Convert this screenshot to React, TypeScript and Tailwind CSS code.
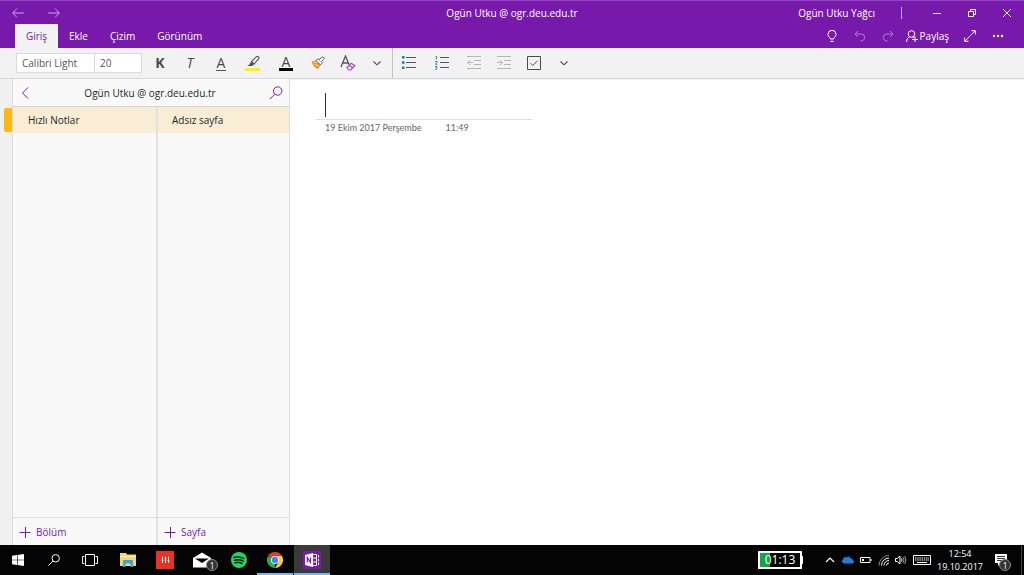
import React from 'react';

const tabs = ['Ekle', 'Çizim', 'Görünüm'];

const stroke = { fill: 'none', stroke: 'currentColor' } as const;

const Chevron = () => (
  <svg className="w-2 h-2" viewBox="0 0 8 8" {...stroke}>
    <path d="M.5 2.500L4 5.800l3.500-3.300" strokeWidth="1.100" />
  </svg>
);

const TitleBar = () => (
  <div className="grid h-6 grid-cols-[1fr_auto_1fr] items-center border-t border-[#8f45bd]">
    <div className="flex items-center pl-1 text-[#cfa9e6]">
      <button aria-label="Geri" className="flex w-7 justify-center">
        <svg className="w-3 h-3" viewBox="0 0 12 12" {...stroke}>
          <path d="M12 6H.7M5 1.5L.7 6 5 10.500" />
        </svg>
      </button>
      <button aria-label="İleri" className="ml-2 flex w-7 justify-center">
        <svg className="w-3 h-3" viewBox="0 0 12 12" {...stroke}>
          <path d="M0 6h11.300M7 1.500L11.300 6 7 10.500" />
        </svg>
      </button>
    </div>
    <h1>Ogün Utku @ ogr.deu.edu.tr</h1>
    <div className="flex items-center justify-end">
      <span>Ogün Utku Yağcı</span>
      <span className="ml-[26px] mr-[17px] h-3 w-px bg-white/60" />
      <button aria-label="Simge durumuna küçült" className="flex w-[35px] justify-center">
        <svg className="w-2 h-2" viewBox="0 0 8 8" {...stroke}><path d="M0 4.500h8" /></svg>
      </button>
      <button aria-label="Geri yükle" className="flex w-[35px] justify-center">
        <svg className="w-2 h-2" viewBox="0 0 8 8" {...stroke}>
          <path d="M.5 2.500h5v5h-5zM2.500 2V.5h5v5H6" />
        </svg>
      </button>
      <button aria-label="Kapat" className="flex w-[35px] justify-center">
        <svg className="w-2 h-2" viewBox="0 0 8 8" {...stroke}><path d="M0 0l8 8M8 0L0 8" /></svg>
      </button>
    </div>
  </div>
);

const TabBar = () => (
  <div className="flex h-6 items-stretch justify-between pl-[15px]">
    <nav className="flex">
      <button className="w-[43px] bg-[#f2f2f2] text-[#7719aa]">Giriş</button>
      {tabs.map((tab) => (
        <button key={tab} className="px-[11px]">{tab}</button>
      ))}
    </nav>
    <div className="flex items-center pr-3">
      <button aria-label="Göster" className="flex w-7 justify-center">
        <svg className="w-3 h-3" viewBox="0 0 12 12" {...stroke}>
          <path d="M4.300 9V8C2.700 6.800 2 5.800 2 4.300a4 4 0 018 0c0 1.500-.7 2.500-2.300 3.700v1zM4.500 11.300h3" />
        </svg>
      </button>
      <button aria-label="Geri al" className="flex w-7 justify-center text-[#b27fd3]">
        <svg className="w-3 h-3" viewBox="0 0 12 12" {...stroke}>
          <path d="M4 1L1 4l3 3M1 4h6.500a3.500 3.500 0 013.200 3.500C10.700 9.500 9 11 6.500 11" />
        </svg>
      </button>
      <button aria-label="Yinele" className="flex w-7 justify-center text-[#b27fd3]">
        <svg className="w-3 h-3" viewBox="0 0 12 12" {...stroke}>
          <path d="M8 1l3 3-3 3M11 4H4.500a3.500 3.500 0 00-3.200 3.500C1.300 9.500 3 11 5.500 11" />
        </svg>
      </button>
      <button className="ml-1 flex items-center gap-[2px]">
        <svg className="w-3 h-3" viewBox="0 0 12 12" {...stroke}>
          <circle cx="5.500" cy="4" r="3.300" />
          <path d="M.6 12c0-2.800 1.300-4.500 3.200-5.200M7 7l1 1M6 9.500h6M9 6.500v6" />
        </svg>
        Paylaş
      </button>
      <button aria-label="Tam ekran" className="ml-[7px] flex w-7 justify-center">
        <svg className="w-3 h-3" viewBox="0 0 12 12" {...stroke}>
          <path d="M1 11L11 1M7.500.7h3.800v3.800M.7 7.500v3.800h3.800" />
        </svg>
      </button>
      <button aria-label="Diğer" className="flex w-7 justify-center">
        <svg className="w-3 h-3" viewBox="0 0 12 12" fill="currentColor">
          <circle cx="2" cy="6" r="1.200" /><circle cx="6" cy="6" r="1.200" /><circle cx="10" cy="6" r="1.200" />
        </svg>
      </button>
    </div>
  </div>
);

const IndentLines = ({ arrow }: { arrow: string }) => (
  <svg className="w-[14px] h-[14px]" viewBox="0 0 14 14" {...stroke}>
    <path d="M0 .5h14M7 4.500h7M7 8.500h7M0 12.500h14" />
    <path d={arrow} />
  </svg>
);

const Toolbar = () => (
  <div className="flex h-[31px] items-center border-b border-[#d8d8d8] bg-[#f2f2f2] pl-4 text-[#4a4a4a]">
    <input aria-label="Yazı tipi" defaultValue="Calibri Light" className="h-5 w-[79px] border border-[#dadada] bg-white px-[5px] text-[#555]" />
    <input aria-label="Yazı tipi boyutu" defaultValue="20" className="h-5 w-[47px] border border-l-0 border-[#dadada] bg-white px-[5px] text-[#555]" />
    <button className="ml-[3px] w-[30px] text-sm font-bold">K</button>
    <button className="w-[30px] text-sm italic">T</button>
    <button className="flex w-8 justify-center text-sm">
      <span className="border-b border-[#555] px-px leading-[14px]">A</span>
    </button>
    <button aria-label="Vurgulayıcı" className="flex w-8 justify-center">
      <svg className="w-4 h-4" viewBox="0 0 16 16">
        <path d="M0 13h15v3H0z" fill="#fff200" />
        <path d="M6.500 6.500l5-4.800c1.500-.8 3 .5 2.300 2L9 9z" fill="none" stroke="#555" strokeWidth="1.100" />
        <path d="M6 6.500L9.300 9.500 7 11H2.500l2.300-2z" fill="#555" />
      </svg>
    </button>
    <button className="flex w-[34px] justify-center text-sm">
      <span className="border-b-3 border-black px-[3px] leading-[13px]">A</span>
    </button>
    <button aria-label="Biçim boyacısı" className="flex w-[29px] justify-center">
      <svg className="w-[14px] h-[14px]" viewBox="0 0 14 14">
        <path d="M.5 5.500l4.300-1 5 4.300-2.800 4.200C4 12 1.500 9 .5 5.500z" fill="#e8932b" />
        <path d="M2.500 6l5 .8M3.500 8l4 2" stroke="#fbe3bb" strokeWidth=".9" />
        <path d="M4.800 4.500L7 2.800l4.500 4-2 2z" fill="#fff" stroke="#555" strokeWidth=".9" />
        <path d="M8 3.600L11.800.8l1.600 1.500-3 3.500" fill="#fff" stroke="#555" strokeWidth=".9" />
      </svg>
    </button>
    <button aria-label="Biçimlendirmeyi temizle" className="flex w-[31px] justify-center">
      <svg className="w-4 h-4" viewBox="0 0 16 16" fill="none">
        <path d="M1 12L5.500 1 9 9.500M2.600 8h5.800" stroke="#555" strokeWidth="1.300" />
        <path d="M7 12.500l4.200-4.200 3.600 2.400-4 4.300H9zM9.300 10.300l3.300 2.500" stroke="#b146c2" strokeWidth="1.200" />
      </svg>
    </button>
    <button aria-label="Diğer yazı tipi seçenekleri" className="flex w-7 justify-center"><Chevron /></button>
    <span className="ml-px h-full w-px bg-[#c4c4c4]" />
    <button aria-label="Madde işaretleri" className="flex w-8 justify-center">
      <svg className="w-[14px] h-[14px]" viewBox="0 0 14 14">
        <path d="M4 1.500h10M4 6.500h10M4 11.500h10" stroke="#555" />
        <path d="M0 0h2.500v2.500H0zM0 5.300h2.500v2.500H0zM0 10.500h2.500V13H0z" fill="#1c7da3" />
      </svg>
    </button>
    <button aria-label="Numaralandırma" className="flex w-[33px] justify-center">
      <svg className="w-[14px] h-[14px]" viewBox="0 0 14 14" fill="none">
        <path d="M5 1.500h9M5 6.500h9M5 11.500h9" stroke="#555" />
        <path d="M.5.8l1-.5V3.500M0 5.500h2v1L.3 8.300H2.400M0 10.500h2L1 11.800c1.600 0 1.600 1.700-1 1.500" stroke="#1c7da3" strokeWidth=".9" />
      </svg>
    </button>
    <button aria-label="Girintiyi azalt" disabled className="flex w-[31px] justify-center text-[#b5b5b5]">
      <IndentLines arrow="M6 6.500H.7M3 4L.7 6.500 3 9" />
    </button>
    <button aria-label="Girintiyi artır" disabled className="flex w-[30px] justify-center text-[#b5b5b5]">
      <IndentLines arrow="M0 6.500h5.300M3 4l2.300 2.500L3 9" />
    </button>
    <button aria-label="Yapılacak etiketi" className="flex w-[30px] justify-center">
      <svg className="w-[14px] h-[14px]" viewBox="0 0 14 14" {...stroke}>
        <path d="M.5.5h13v13H.5zM3.500 7.200l2.300 2.300 4.700-4.800" />
      </svg>
    </button>
    <button aria-label="Diğer etiketler" className="flex w-[29px] justify-center"><Chevron /></button>
  </div>
);

const AddButton = ({ label }: { label: string }) => (
  <button className="flex h-7 items-center gap-[5px] border-t border-[#dcdcdc] pl-[6px] text-[#7719aa]">
    <svg className="w-3 h-3" viewBox="0 0 12 12" {...stroke}><path d="M.5 6.500h11M6.500 1v11" /></svg>
    {label}
  </button>
);

const Sidebar = () => (
  <aside className="flex border-r border-[#dcdcdc] text-[#262626]">
    <div className="flex w-[13px] flex-col items-end border-r border-[#dcdcdc] bg-[#f0f0f0] pt-[29px]">
      <span className="h-6 w-2 rounded-l-xs bg-[#fdb913]" />
    </div>
    <div className="flex w-[276px] flex-col bg-[#f9f9f9]">
      <div className="flex h-7 items-center justify-between border-b border-[#d4d4d4] px-[6px] text-[#7719aa]">
        <button aria-label="Geri">
          <svg className="w-3 h-3" viewBox="0 0 12 12" {...stroke}><path d="M9 .5L3.500 6 9 11.500" /></svg>
        </button>
        <h2 className="text-[#262626]">Ogün Utku @ ogr.deu.edu.tr</h2>
        <button aria-label="Ara">
          <svg className="w-[14px] h-[14px]" viewBox="0 0 14 14" {...stroke}>
            <circle cx="8.700" cy="5" r="4.200" /><path d="M5.700 8.200L.7 13.200" />
          </svg>
        </button>
      </div>
      <div className="flex flex-1">
        <div className="flex w-[145px] flex-col border-r-2 border-[#e2e2e2]">
          <button className="h-[26px] bg-[#f9edd5] pl-[15px] text-left">Hızlı Notlar</button>
          <div className="flex-1" />
          <AddButton label="Bölüm" />
        </div>
        <div className="flex flex-1 flex-col">
          <button className="h-[26px] bg-[#f9edd5] pl-[14px] text-left">Adsız sayfa</button>
          <div className="flex-1" />
          <AddButton label="Sayfa" />
        </div>
      </div>
    </div>
  </aside>
);

const NotePage = () => (
  <main className="flex-1 bg-white pl-[26px] pt-3 shadow-[inset_0_2px_2px_-1px_#eee]">
    <div className="flex h-[29px] w-[216px] border-b border-[#e0e0e0] pl-[9px] pt-[2px]">
      <span className="h-6 w-px bg-[#333]" />
    </div>
    <div className="flex gap-6 pl-[9px] pt-[2px] font-[Lato,sans-serif] text-[9px] leading-3 text-[#666]">
      <span>19 Ekim 2017 Perşembe</span>
      <span>11:49</span>
    </div>
  </main>
);

const Count = () => (
  <span className="flex h-3 w-3 items-center justify-center rounded-full border border-[#888] bg-[#333] text-[9px] leading-none text-white">1</span>
);

const Taskbar = () => (
  <footer className="flex h-[30px] items-stretch justify-between bg-[#040404] text-white">
    <div className="flex">
      <button aria-label="Başlat" className="flex w-9 items-center justify-center">
        <svg className="w-3 h-3" viewBox="0 0 12 12" fill="#fff">
          <path d="M0 1.700L5 1v4.700H0zM5.600.9L12 0v5.700H5.600zM0 6.300h5V11l-5-.7zM5.600 6.300H12V12l-6.400-.9z" />
        </svg>
      </button>
      <button aria-label="Ara" className="flex w-9 items-center justify-center">
        <svg className="w-3 h-3" viewBox="0 0 12 12" {...stroke}>
          <circle cx="7.700" cy="4.300" r="3.700" /><path d="M5 7L.5 11.500" />
        </svg>
      </button>
      <button aria-label="Görev görünümü" className="flex w-9 items-center justify-center">
        <svg className="w-4 h-3" viewBox="0 0 16 12" {...stroke}>
          <path d="M3.500.5h9v11h-9zM2.500 2.500h-2v7h2M13.500 2.500h2v7h-2" />
        </svg>
      </button>
      <button aria-label="Dosya Gezgini" className="ml-px flex w-[37px] items-center justify-center">
        <svg className="w-4 h-4" viewBox="0 0 16 16">
          <path d="M0 1h6l1 1.500h9V14H0z" fill="#f5d777" />
          <path d="M0 4h16v1H0z" fill="#fff0b5" />
          <path d="M3 8h10v7h-2.500v-3.500h-5V15H3z" fill="#35a9e0" />
        </svg>
      </button>
      <button aria-label="Medya" className="flex w-[37px] items-center justify-center">
        <svg className="w-[18px] h-[18px]" viewBox="0 0 18 18">
          <path d="M0 0h18v18H0z" fill="#ee2f24" />
          <path d="M6.500 5.500V12M9.500 5.500V12M12.500 5.500V12" stroke="#fff" />
          <path d="M5.500 9.500h2M8.500 7.500h2M11.500 9.500h2" stroke="#fff" strokeWidth=".8" />
        </svg>
      </button>
      <button aria-label="Posta" className="relative flex w-[37px] items-center justify-center">
        <svg className="w-5 h-4" viewBox="0 0 20 16">
          <path d="M1 6l9-5.500L19 6v9.500H1z" fill="#fff" />
          <path d="M3 6.500h14L10 11z" fill="#040404" />
        </svg>
        <span className="absolute bottom-1 right-[2px]"><Count /></span>
      </button>
      <button aria-label="Spotify" className="flex w-[37px] items-center justify-center">
        <svg className="w-4 h-4" viewBox="0 0 16 16">
          <circle cx="8" cy="8" r="8" fill="#1ed760" />
          <path d="M3 5.500c3.300-1 7-.7 10 1M3.600 8.200c3-.8 6-.5 8.500.9M4 10.700c2.500-.6 5-.4 7 .8" fill="none" stroke="#040404" strokeWidth="1.400" strokeLinecap="round" />
        </svg>
      </button>
      <button aria-label="Chrome" className="flex w-9 items-center justify-center border-b-2 border-[#76b9ed] pt-[2px]">
        <svg className="w-4 h-4" viewBox="0 0 16 16">
          <path d="M8 8L1.070 4A8 8 0 0114.930 4z" fill="#e33b2e" />
          <path d="M8 8v8A8 8 0 011.070 4z" fill="#2da94f" />
          <path d="M8 4h6.930A8 8 0 018 16l3.460-6z" fill="#fcc934" />
          <circle cx="8" cy="8" r="4" fill="#fff" />
          <circle cx="8" cy="8" r="3.200" fill="#4285f4" />
        </svg>
      </button>
      <button aria-label="OneNote" className="ml-px flex w-9 items-center justify-center border-b-2 border-[#76b9ed] bg-[#3a3a3c] pt-[2px]">
        <span className="flex h-[18px] w-[18px] items-center justify-center bg-[#7719aa]">
          <svg className="w-[14px] h-[14px]" viewBox="0 0 14 14" fill="none" stroke="#fff">
            <path d="M0 2l8-2v14l-8-2z" fill="#fff" stroke="none" />
            <path d="M2.300 9.500v-5l3.200 5v-5" stroke="#7719aa" strokeWidth="1.200" />
            <path d="M8 1.500h3.500v11H8M8 5h3M8 9h3M13.500 2v2.500M13.500 5.800v2.500M13.500 9.500V12" />
          </svg>
        </span>
      </button>
    </div>
    <div className="flex items-center">
      <div className="flex items-center">
        <span className="flex h-[18px] w-11 items-center justify-center border-2 border-white bg-[linear-gradient(90deg,#17a34a_10px,#040404_10px)] text-xs leading-none">01:13</span>
        <span className="h-2 w-px bg-white" />
      </div>
      <button aria-label="Gizli simgeler" className="ml-[18px] flex w-[18px] justify-center">
        <svg className="w-[10px] h-2" viewBox="0 0 10 8" {...stroke}><path d="M1 6l4-4 4 4" strokeWidth="1.200" /></svg>
      </button>
      <svg className="ml-[3px] w-3 h-2" viewBox="0 0 12 8" fill="#1b7fe0">
        <path d="M2.500 7.500A2.200 2.200 0 011 3.500 2.700 2.700 0 014.500 1.200 3 3 0 019 2.500a2 2 0 012 2 1.700 1.700 0 010 3z" />
      </svg>
      <svg className="ml-[6px] w-3 h-2" viewBox="0 0 12 8" {...stroke}>
        <path d="M.5 1.500h9.500v5H.5zM11 3v2" /><path d="M2 3h2v2H2z" fill="#fff" stroke="none" />
      </svg>
      <svg className="ml-[6px] w-3 h-3" viewBox="0 0 12 12" {...stroke}>
        <path d="M1 11.500A10 10 0 0111 1.500" stroke="#888" />
        <path d="M3.500 11.500A7.500 7.500 0 0111 4M6 11.500a5 5 0 015-5M8.500 11.500A2.500 2.500 0 0111 9" />
      </svg>
      <svg className="ml-[5px] w-3 h-3" viewBox="0 0 12 12" {...stroke}>
        <path d="M.5 4.500h1.700L5 2v8L2.200 7.500H.5zM6.500 4.500q1 1.500 0 3" />
        <path d="M8 3q2 3 0 6M9.700 2q2.500 4 0 8" stroke="#999" />
      </svg>
      <svg className="ml-[6px] w-[18px] h-[10px]" viewBox="0 0 18 10" {...stroke}>
        <path d="M.5.5h17v9H.5z" /><path d="M2 3h14M2 5h14" strokeDasharray="1.500 .7" /><path d="M4 7.500h10" />
      </svg>
      <time className="ml-[6px] w-[46px] text-center text-[9px] leading-[13px]">
        12:54<br />19.10.2017
      </time>
      <button aria-label="Bildirimler" className="relative flex h-full w-9 items-center justify-center">
        <svg className="w-3 h-3" viewBox="0 0 12 12">
          <path d="M0 0h12v9H6l-3 3V9H0z" fill="#fff" />
          <path d="M2 2.500h8M2 4.500h8M2 6.500h5" stroke="#040404" strokeWidth=".8" />
        </svg>
        <span className="absolute bottom-1 right-2"><Count /></span>
      </button>
      <span className="mx-[2px] h-full w-px bg-[#444]" />
    </div>
  </footer>
);

const App: React.FC = () => {
  return (
    <div className="flex min-h-screen flex-col bg-white font-['Open_Sans',sans-serif] text-[10px] leading-4">
      <header>
        <div className="bg-[#7719aa] text-white">
          <TitleBar />
          <TabBar />
        </div>
        <Toolbar />
      </header>
      <div className="flex flex-1">
        <Sidebar />
        <NotePage />
      </div>
      <Taskbar />
    </div>
  );
};

export default App;
